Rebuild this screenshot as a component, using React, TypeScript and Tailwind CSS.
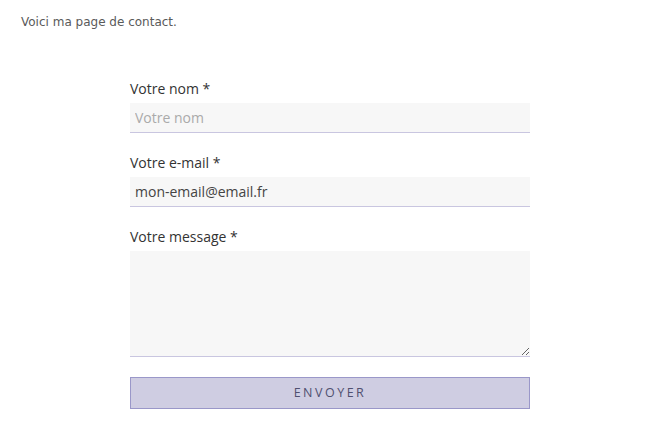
import React from "react";

export default function App() {
  return (
    <div className="w-[662px] h-[424px] bg-white overflow-hidden">
      <p className="pl-[21px] pt-[13px] text-[12px] leading-[18px] text-[#5a5a5a]" style={{ fontFamily: '"DejaVu Sans", Verdana, sans-serif' }}>
        Voici ma page de contact.
      </p>
      <form
        className="ml-[130px] mt-[48px] w-[400px] flex flex-col"
        style={{ fontFamily: '"Open Sans", sans-serif' }}
        onSubmit={(e) => e.preventDefault()}
      >
        <label className="text-[14px] leading-[20px] text-[#333333]">Votre nom *</label>
        <input
          type="text"
          placeholder="Votre nom"
          className="mt-[4px] h-[30px] w-full bg-[#f7f7f7] border-0 border-b border-[#c9c6e0] px-[5px] text-[14px] text-[#555555] placeholder:text-[#aaaaaa] outline-none"
        />
        <label className="mt-[20px] text-[14px] leading-[20px] text-[#333333]">Votre e-mail *</label>
        <input
          type="email"
          defaultValue="mon-email@email.fr"
          className="mt-[4px] h-[30px] w-full bg-[#f7f7f7] border-0 border-b border-[#c9c6e0] px-[5px] text-[14px] text-[#444444] outline-none"
        />
        <label className="mt-[20px] text-[14px] leading-[20px] text-[#333333]">Votre message *</label>
        <textarea
          className="mt-[4px] h-[106px] w-full bg-[#f7f7f7] border-0 border-b border-[#c9c6e0] px-[5px] py-[4px] text-[14px] text-[#444444] outline-none resize-y block"
        />
        <button
          type="submit"
          className="mt-[20px] h-[32px] w-full bg-[#cfcde2] border border-[#9a97c9] text-[12.5px] tracking-[2.5px] text-[#505070]"
        >
          ENVOYER
        </button>
      </form>
    </div>
  );
}
